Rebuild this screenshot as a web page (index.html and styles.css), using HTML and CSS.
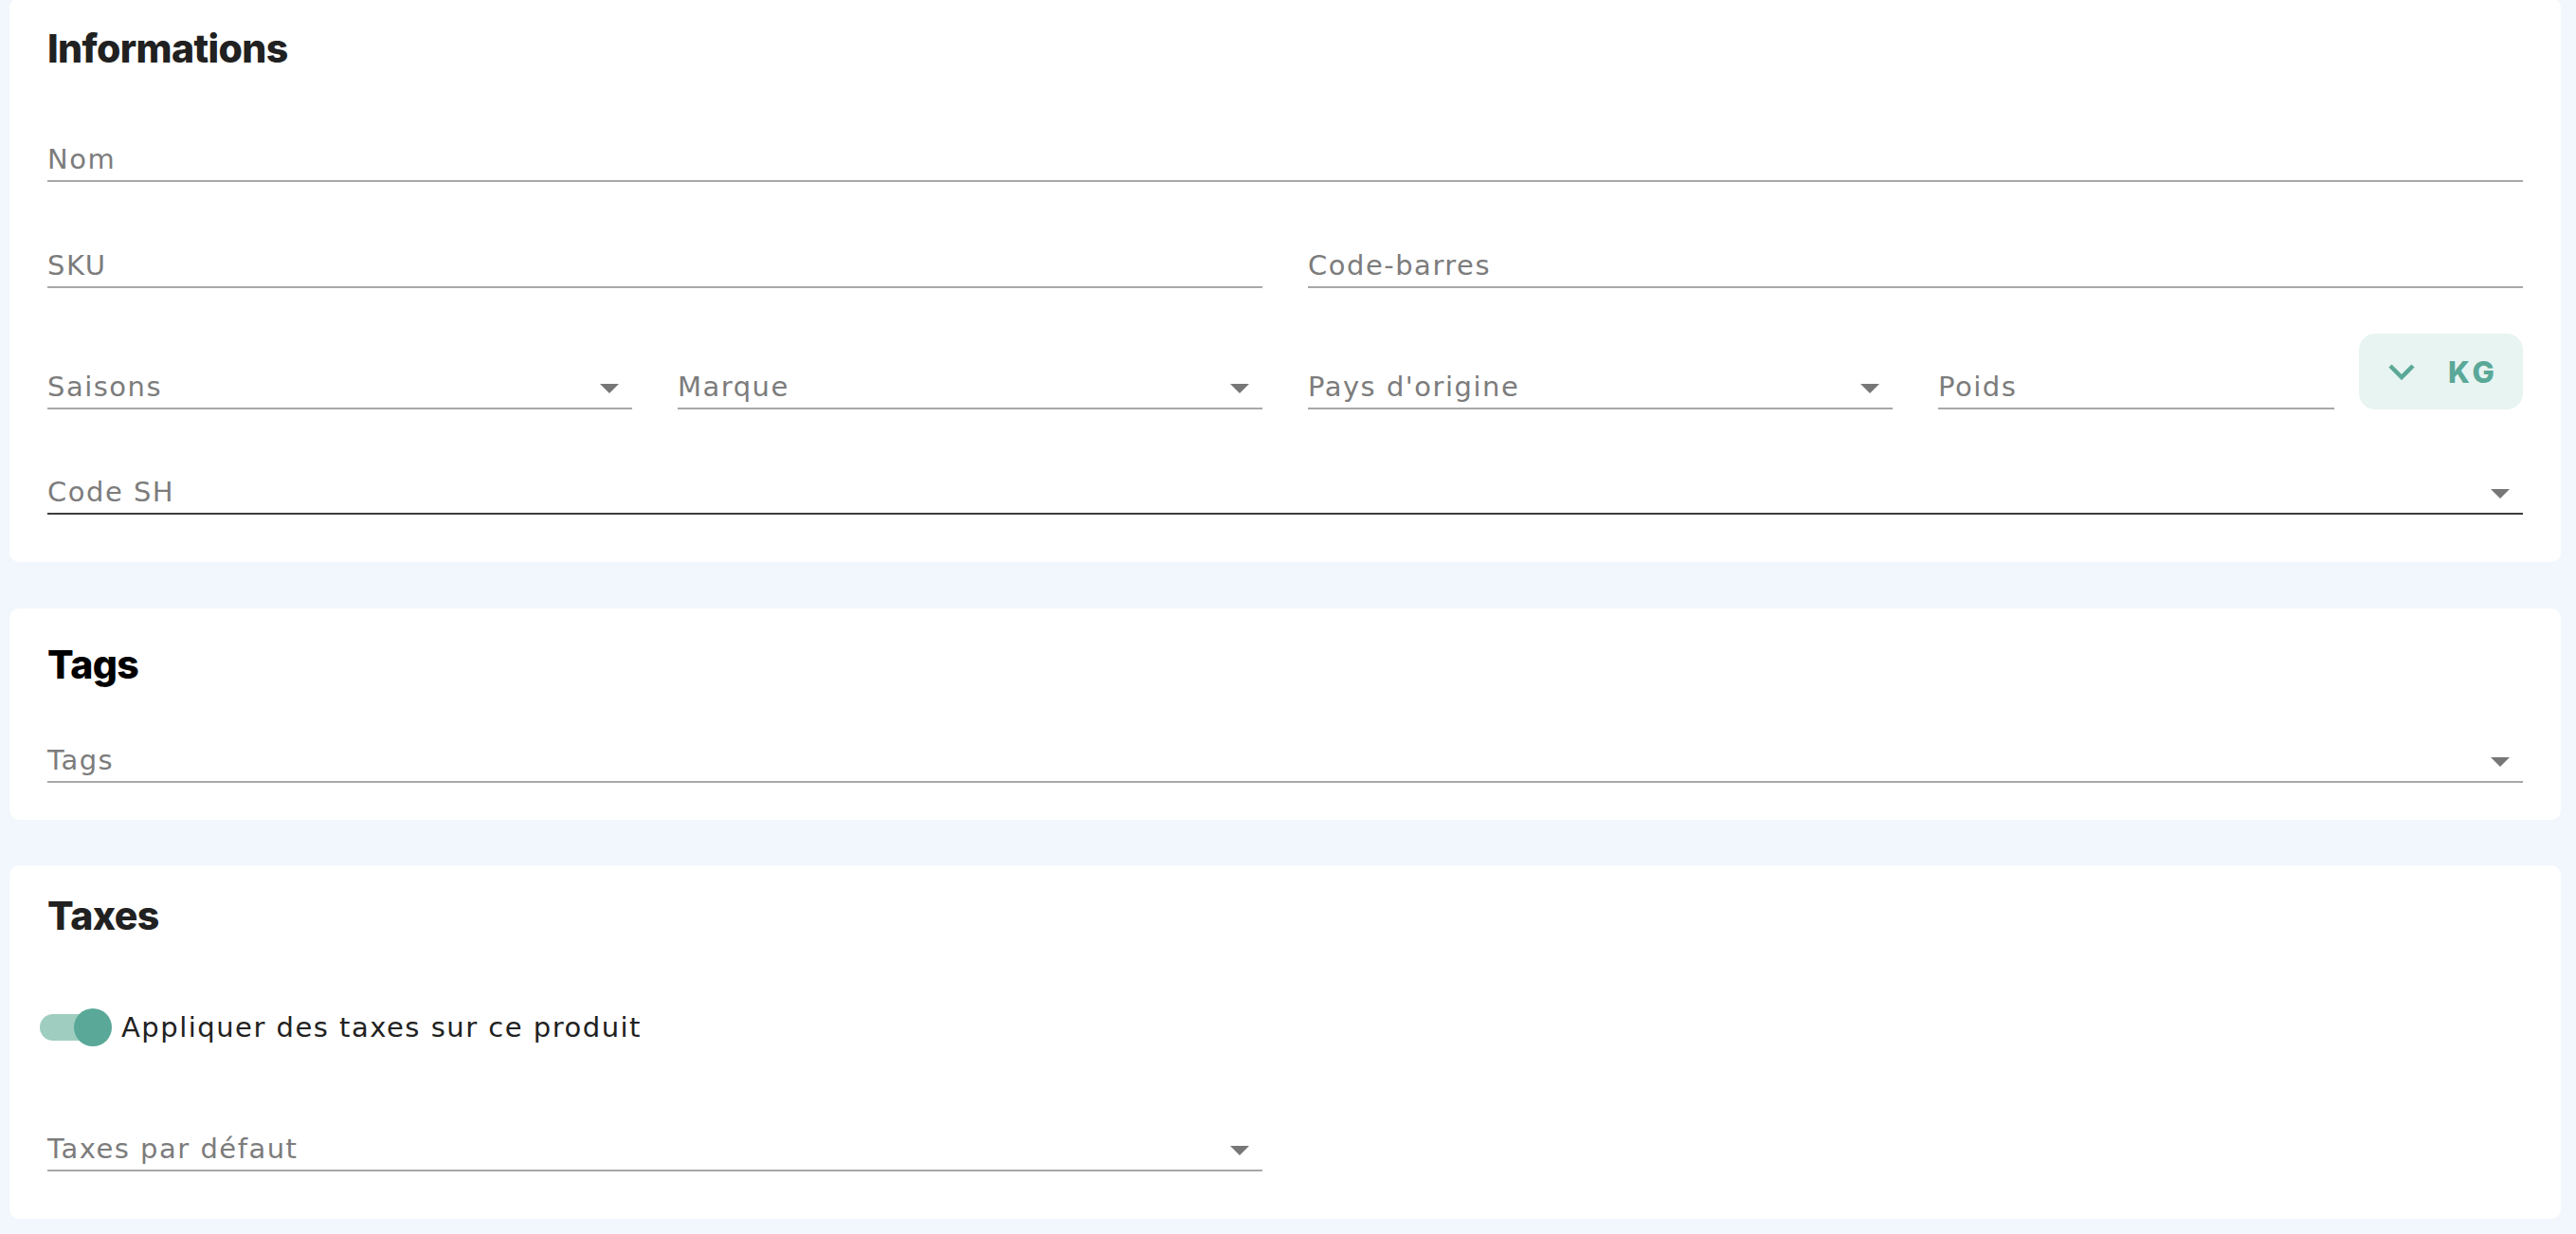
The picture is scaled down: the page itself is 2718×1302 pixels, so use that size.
FILE: index.html
```html
<!DOCTYPE html>
<html lang="fr">
<head>
    <meta charset="UTF-8">
    <meta name="viewport" content="width=device-width, initial-scale=1.0">
    <title>Produit</title>
    <link rel="stylesheet" href="styles.css">
</head>
<body>
    <div class="page">
        <!-- Informations -->
        <section class="card card-first">
            <h2 class="card-title">Informations</h2>

            <div class="form-row row-first">
                <div class="field"><span class="field-label">Nom</span></div>
            </div>

            <div class="form-row cols-2">
                <div class="field"><span class="field-label">SKU</span></div>
                <div class="field"><span class="field-label">Code-barres</span></div>
            </div>

            <div class="form-row cols-4 row-units">
                <div class="field select">
                    <span class="field-label">Saisons</span>
                    <svg class="caret" width="20" height="10" viewBox="0 0 20 10"><polygon points="0,0 20,0 10,10"/></svg>
                </div>
                <div class="field select">
                    <span class="field-label">Marque</span>
                    <svg class="caret" width="20" height="10" viewBox="0 0 20 10"><polygon points="0,0 20,0 10,10"/></svg>
                </div>
                <div class="field select">
                    <span class="field-label">Pays d'origine</span>
                    <svg class="caret" width="20" height="10" viewBox="0 0 20 10"><polygon points="0,0 20,0 10,10"/></svg>
                </div>
                <div class="weight">
                    <div class="field"><span class="field-label">Poids</span></div>
                    <button class="unit-btn" type="button">
                        <svg width="30" height="18" viewBox="0 0 30 18"><path d="M3 3 L15 15 L27 3" fill="none" stroke="currentColor" stroke-width="4.5"/></svg>
                        <span>KG</span>
                    </button>
                </div>
            </div>

            <div class="form-row row-last">
                <div class="field select is-hover">
                    <span class="field-label">Code SH</span>
                    <svg class="caret" width="20" height="10" viewBox="0 0 20 10"><polygon points="0,0 20,0 10,10"/></svg>
                </div>
            </div>
        </section>

        <!-- Tags -->
        <section class="card card-tags">
            <h2 class="card-title">Tags</h2>
            <div class="form-row">
                <div class="field select">
                    <span class="field-label">Tags</span>
                    <svg class="caret" width="20" height="10" viewBox="0 0 20 10"><polygon points="0,0 20,0 10,10"/></svg>
                </div>
            </div>
        </section>

        <!-- Taxes -->
        <section class="card">
            <h2 class="card-title">Taxes</h2>
            <label class="toggle-row">
                <span class="toggle"><span class="toggle-track"></span><span class="toggle-knob"></span></span>
                <span class="toggle-text">Appliquer des taxes sur ce produit</span>
            </label>
            <div class="form-row cols-2 row-taxes">
                <div class="field select">
                    <span class="field-label">Taxes par défaut</span>
                    <svg class="caret" width="20" height="10" viewBox="0 0 20 10"><polygon points="0,0 20,0 10,10"/></svg>
                </div>
            </div>
        </section>
    </div>
</body>
</html>
```

FILE: styles.css
```css
/* Page */
body {
    margin: 0;
    background: #f2f6fd;
    font-family: "DejaVu Sans", Arial, sans-serif;
}

.page {
    padding: 0 16px 16px 10px;
    margin-top: -2px;
}

/* Cards */
.card {
    background: #fff;
    border-radius: 10px;
    padding: 29px 40px 50px;
    margin-bottom: 48px;
}

.card:last-child {
    margin-bottom: 0;
}

.card-first {
    margin-bottom: 49px;
}

.card-tags {
    padding-top: 35px;
    padding-bottom: 39px;
}

.card-title {
    margin: 0;
    font-family: Inter, Roboto, Arial, sans-serif;
    font-weight: 800;
    font-size: 41px;
    line-height: 48px;
    letter-spacing: -0.6px;
    color: #212121;
}

.card-tags .card-title {
    color: #000;
}

/* Form rows */
.form-row {
    margin-top: 56px;
}

.row-first {
    margin-top: 61px;
}

.card-tags .form-row {
    margin-top: 45px;
}

.cols-2 {
    display: grid;
    grid-template-columns: 1fr 1fr;
    column-gap: 48px;
}

.cols-4 {
    display: grid;
    grid-template-columns: repeat(4, 1fr);
    column-gap: 48px;
    align-items: end;
}

.row-units {
    margin-top: 48px;
}

.row-last {
    margin-top: 55px;
}

.row-taxes {
    margin-top: 76px;
}

/* Text fields */
.field {
    height: 56px;
    box-sizing: border-box;
    display: flex;
    align-items: flex-end;
    padding-bottom: 4px;
    border-bottom: 2px solid #a8a8a8;
}

.field-label {
    flex: 1;
    font-size: 29px;
    line-height: 36px;
    letter-spacing: 1.5px;
    color: #7c7c7c;
}

.field.is-hover {
    border-bottom-color: #3d3d3d;
}

.caret {
    fill: #777;
    margin: 0 14px 11px 0;
}

/* Weight + unit */
.weight {
    display: flex;
    align-items: flex-end;
}

.weight .field {
    flex: 1;
}

.unit-btn {
    margin-left: 26px;
    width: 173px;
    height: 80px;
    border: none;
    border-radius: 17px;
    background: #e8f4f1;
    color: #5aa898;
    display: flex;
    align-items: center;
    justify-content: center;
    gap: 34px;
    padding: 0 0 0 4px;
    font-family: Inter, Arial, sans-serif;
    font-weight: 800;
    font-size: 31px;
    letter-spacing: 4px;
    cursor: pointer;
}

/* Toggle */
.toggle-row {
    display: flex;
    align-items: center;
    margin-top: 74px;
    height: 40px;
}

.toggle {
    position: relative;
    flex: none;
    width: 86px;
    height: 40px;
    margin-left: -8px;
}

.toggle-track {
    position: absolute;
    left: 0;
    top: 6px;
    width: 68px;
    height: 28px;
    border-radius: 14px;
    background: #9fcec1;
}

.toggle-knob {
    position: absolute;
    left: 36px;
    top: 0;
    width: 40px;
    height: 40px;
    border-radius: 50%;
    background: #5aa898;
}

.toggle-text {
    font-size: 29px;
    letter-spacing: 1.5px;
    color: #212121;
}
```
